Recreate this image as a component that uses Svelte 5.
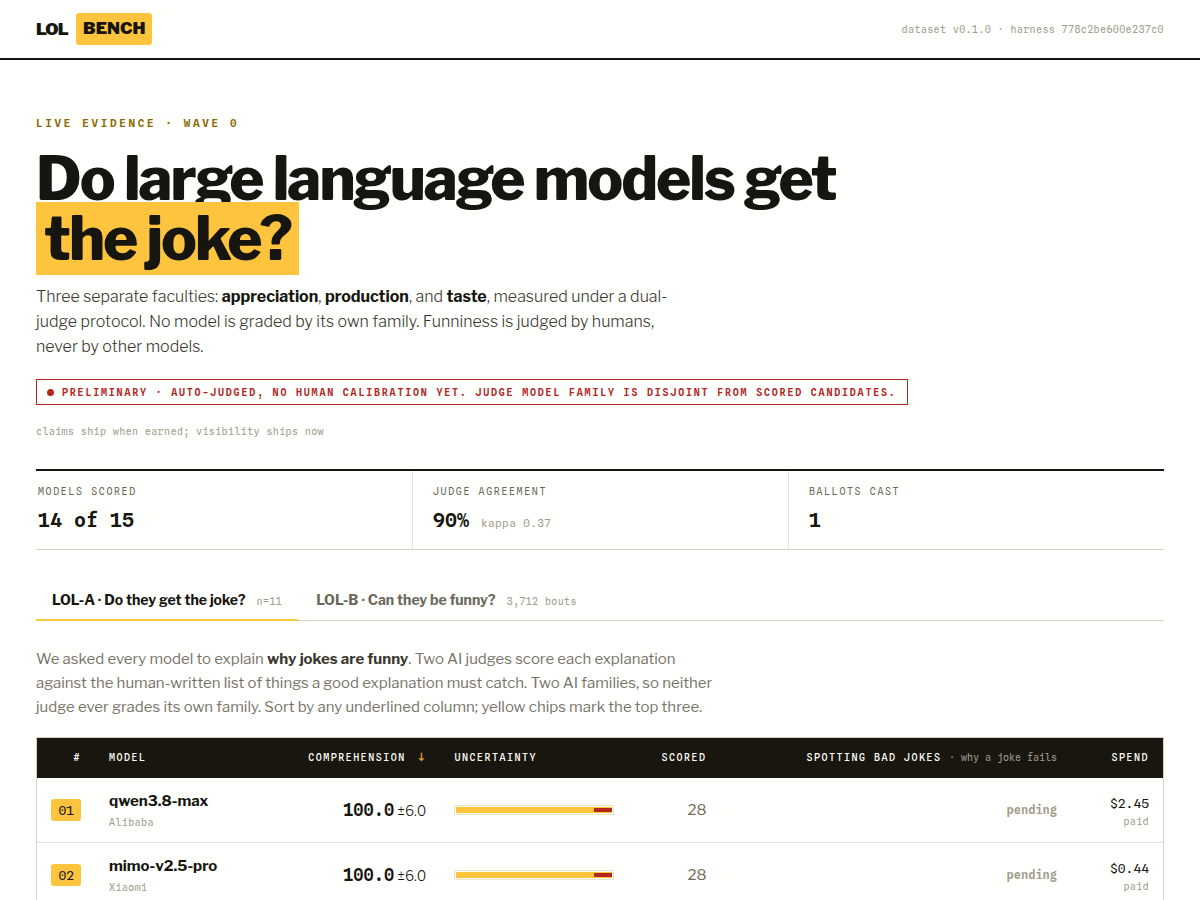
<script>
  const stats = [
    { label: 'Models scored', value: '14 of 15', note: '' },
    { label: 'Judge agreement', value: '90%', note: 'kappa 0.37' },
    { label: 'Ballots cast', value: '1', note: '' }
  ];

  const tabs = [
    { id: 'a', title: 'LOL-A · Do they get the joke?', note: 'n=11' },
    { id: 'b', title: 'LOL-B · Can they be funny?', note: '3,712 bouts' }
  ];

  const rows = [
    { rank: '01', model: 'qwen3.8-max', maker: 'Alibaba', score: 100, error: 6, scored: 28, spend: '$2.45' },
    { rank: '02', model: 'mimo-v2.5-pro', maker: 'Xiaomi', score: 100, error: 6, scored: 28, spend: '$0.44' }
  ];

  let active = $state('a');
  let descending = $state(true);
  let sorted = $derived(
    [...rows].sort((x, y) => (descending ? y.score - x.score : x.score - y.score))
  );
</script>

<header class="topbar">
  <a class="brand" href="#top"><span>LOL</span><span class="badge">BENCH</span></a>
  <span class="meta">dataset v0.1.0 · harness 778c2be600e237c0</span>
</header>

<main>
  <section class="hero">
    <p class="eyebrow">Live evidence · Wave 0</p>
    <h1>Do large language models get <mark>the joke?</mark></h1>
    <p class="lede">
      Three separate faculties: <strong>appreciation</strong>, <strong>production</strong>, and
      <strong>taste</strong>, measured under a dual-judge protocol. No model is graded by its own
      family. Funniness is judged by humans, never by other models.
    </p>
    <p class="notice">
      <span class="dot"></span>
      <span>Preliminary · auto-judged, no human calibration yet. Judge model family is disjoint from scored candidates.</span>
    </p>
    <p class="meta motto">claims ship when earned; visibility ships now</p>
  </section>

  <dl class="stats">
    {#each stats as stat}
      <div class="stat">
        <dt>{stat.label}</dt>
        <dd>{stat.value}{#if stat.note}<small>{stat.note}</small>{/if}</dd>
      </div>
    {/each}
  </dl>

  <div class="tabs" role="tablist">
    {#each tabs as tab}
      <button
        type="button"
        role="tab"
        aria-selected={active === tab.id}
        class:active={active === tab.id}
        onclick={() => (active = tab.id)}
      >
        <span>{tab.title}</span><span class="meta">{tab.note}</span>
      </button>
    {/each}
  </div>

  <p class="intro">
    We asked every model to explain <strong>why jokes are funny</strong>. Two AI judges score each
    explanation against the human-written list of things a good explanation must catch. Two AI
    families, so neither judge ever grades its own family. Sort by any underlined column; yellow
    chips mark the top three.
  </p>

  <table>
    <colgroup>
      <col class="c-rank" /><col class="c-model" /><col class="c-score" /><col class="c-range" />
      <col class="c-count" /><col class="c-spot" /><col class="c-spend" />
    </colgroup>
    <thead>
      <tr>
        <th class="num">#</th>
        <th>Model</th>
        <th class="num">
          <button type="button" class="sort" onclick={() => (descending = !descending)}>
            <span>Comprehension</span><span class="arrow">{descending ? '↓' : '↑'}</span>
          </button>
        </th>
        <th>Uncertainty</th>
        <th class="num">Scored</th>
        <th class="num">Spotting bad jokes <span class="hint">· why a joke fails</span></th>
        <th class="num">Spend</th>
      </tr>
    </thead>
    <tbody>
      {#each sorted as row}
        <tr>
          <td class="num"><span class="chip">{row.rank}</span></td>
          <td><div class="name">{row.model}</div><div class="meta maker">{row.maker}</div></td>
          <td class="num"><span class="score">{row.score.toFixed(1)}</span><span class="error">±{row.error.toFixed(1)}</span></td>
          <td>
            <div class="bar">
              <div class="fill" style:width="{row.score}%"></div>
              <div class="whisker" style:width="{row.error * 2}%"></div>
            </div>
          </td>
          <td class="num count">{row.scored}</td>
          <td class="num pending">pending</td>
          <td class="num spend"><div class="money">{row.spend}</div><div class="meta">paid</div></td>
        </tr>
      {/each}
    </tbody>
  </table>
</main>

<style>
  :global(body) {
    margin: 0;
    background: #fffffe;
    color: #16150f;
    font-family: 'Libre Franklin', Inter, sans-serif;
    --mono: 'Spline Sans Mono', 'Liberation Mono', monospace;
    --ink: #16150f;
    --soft: #6b675a;
    --faint: #a09c8c;
    --yellow: #ffc43d;
    --red: #b3261e;
    --line: #d4d1c5;
  }
  p, h1, dl, dd { margin: 0; }
  button { border: 0; background: none; padding: 0; color: inherit; font: inherit; cursor: pointer; }

  .topbar {
    display: flex;
    align-items: center;
    justify-content: space-between;
    height: 58px;
    padding: 0 36px;
    border-bottom: 2px solid var(--ink);
  }
  .brand {
    display: flex;
    align-items: center;
    gap: 8px;
    color: inherit;
    text-decoration: none;
    font-size: 17px;
    font-weight: 900;
    letter-spacing: -0.04em;
  }
  .badge {
    padding: 4px 7px 6px;
    border-radius: 3px;
    background: var(--yellow);
    line-height: 22px;
    letter-spacing: 0;
  }
  .meta {
    font-family: var(--mono);
    font-size: 10px;
    font-weight: 400;
    line-height: 16px;
    letter-spacing: 0.04em;
    color: var(--faint);
  }

  main { padding: 53px 36px 48px; }
  .eyebrow {
    font: 600 11px/20px var(--mono);
    letter-spacing: 0.24em;
    text-transform: uppercase;
    color: #8a6a00;
  }
  h1 {
    margin-top: 16px;
    max-width: 900px;
    font-size: 60px;
    line-height: 60px;
    font-weight: 800;
    letter-spacing: -2px;
  }
  mark { padding: 0 8px; background: var(--yellow); color: inherit; }
  h1 mark { white-space: nowrap; }
  .lede {
    margin-top: 15px;
    max-width: 640px;
    font-size: 16px;
    line-height: 25px;
    font-weight: 300;
    color: #3a382f;
  }
  .lede strong { font-weight: 700; color: var(--ink); }
  .notice {
    display: inline-flex;
    align-items: center;
    gap: 8px;
    margin-top: 20px;
    padding: 4px 10px;
    border: 1px solid var(--red);
    color: var(--red);
    font: 600 10px/16px var(--mono);
    letter-spacing: 0.18em;
    text-transform: uppercase;
  }
  .dot { width: 7px; height: 7px; border-radius: 50%; background: var(--red); flex: none; }
  .motto { margin-top: 18px; }

  .stats {
    display: grid;
    grid-template-columns: repeat(3, 1fr);
    margin-top: 30px;
    border-top: 2px solid var(--ink);
    border-bottom: 1px solid var(--line);
  }
  .stat { padding: 12px 20px 15px; border-left: 1px solid #e4e2d9; }
  .stat:first-child { padding-left: 2px; border-left: 0; }
  dt {
    font: 400 10px/16px var(--mono);
    letter-spacing: 0.16em;
    text-transform: uppercase;
    color: var(--soft);
  }
  dd { margin-top: 7px; font: 600 20px/28px var(--mono); }
  dd small { margin-left: 12px; font-size: 11px; line-height: 11px; font-weight: 400; letter-spacing: 0.04em; color: var(--faint); }

  .tabs { display: flex; gap: 2px; margin-top: 30px; border-bottom: 1px solid var(--line); }
  .tabs button {
    display: flex;
    align-items: baseline;
    gap: 11px;
    margin-bottom: -1px;
    padding: 10px 16px 9px;
    border-bottom: 2px solid transparent;
    font-size: 14px;
    line-height: 20px;
    font-weight: 700;
    color: var(--soft);
  }
  .tabs button.active { border-color: #f2cb3e; color: var(--ink); }

  .intro {
    margin-top: 26px;
    max-width: 690px;
    font-size: 15px;
    line-height: 24px;
    font-weight: 400;
    color: #77736a;
  }
  .intro strong { font-weight: 700; color: #3a382f; }

  table {
    width: 100%;
    margin-top: 18px;
    border: 1px solid var(--line);
    border-spacing: 0;
    table-layout: fixed;
  }
  .c-rank { width: 58px; }
  .c-model { width: 17%; }
  .c-score { width: 154px; }
  .c-range { width: 188px; }
  .c-count { width: 92px; }
  .c-spend { width: 92px; }
  th {
    padding: 11px 14px 13px;
    background: #18160f;
    color: #fffef8;
    font: 500 10px/16px var(--mono);
    letter-spacing: 0.15em;
    text-align: left;
    text-transform: uppercase;
    white-space: nowrap;
  }
  .num { text-align: right; }
  .sort { display: inline-flex; align-items: center; gap: 12px; letter-spacing: inherit; text-transform: inherit; }
  .arrow { font-family: 'IBM Plex Mono', monospace; font-size: 12px; color: #e6ac2c; }
  .hint { font-weight: 400; letter-spacing: 0; text-transform: none; color: var(--faint); }
  td { height: 64px; padding: 0 14px; border-bottom: 1px solid #e4e2d9; white-space: nowrap; }
  .chip {
    display: inline-block;
    padding: 0 7px;
    border-radius: 3px;
    background: var(--yellow);
    font: 400 13px/22px var(--mono);
  }
  td:first-child { padding-left: 0; }
  .name { font-size: 15px; line-height: 22px; font-weight: 700; }
  .maker { margin-top: 2px; }
  .score { font: 600 17px/24px var(--mono); }
  .error { margin-left: 3px; font-size: 14px; font-weight: 300; }
  .bar {
    display: grid;
    align-items: center;
    max-width: 156px;
    height: 6px;
    padding: 1px;
    border: 1px solid #eee3c4;
  }
  .fill, .whisker { grid-area: 1 / 1; }
  .fill { height: 6px; background: var(--yellow); }
  .whisker { height: 4px; justify-self: end; background: var(--red); }
  .count { font-size: 15px; font-weight: 400; color: var(--soft); }
  .pending { font: 600 12px/16px var(--mono); color: var(--faint); }
  .spend { height: 62px; padding-top: 2px; }
  .money { font: 400 13px/20px var(--mono); }
</style>
